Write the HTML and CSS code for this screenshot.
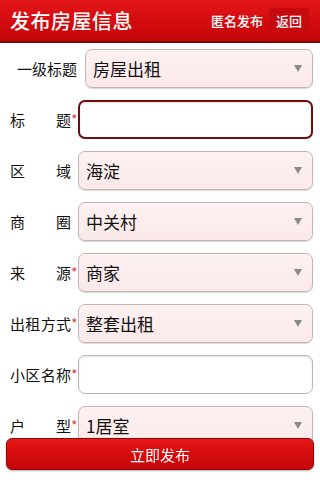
FILE: index.html
```
<!doctype html>
<html>
<head>
  <meta charset="utf-8">
  <title>发布房屋信息</title>
  <link rel="stylesheet" href="styles.css">
</head>
<body>
  <div class="topbar">
    <h1>发布房屋信息</h1>
    <span class="anon">匿名发布</span>
    <span class="back">返回</span>
  </div>
  <div class="form">
    <div class="row first">
      <span class="label">一级标题</span>
      <div class="field select">房屋出租<i class="arrow"></i></div>
    </div>
    <div class="row">
      <span class="label">标题</span><span class="star">*</span>
      <div class="field input focus"></div>
    </div>
    <div class="row">
      <span class="label">区域</span><span class="star"></span>
      <div class="field select">海淀<i class="arrow"></i></div>
    </div>
    <div class="row">
      <span class="label">商圈</span><span class="star"></span>
      <div class="field select">中关村<i class="arrow"></i></div>
    </div>
    <div class="row">
      <span class="label">来源</span><span class="star">*</span>
      <div class="field select">商家<i class="arrow"></i></div>
    </div>
    <div class="row">
      <span class="label">出租方式</span><span class="star">*</span>
      <div class="field select">整套出租<i class="arrow"></i></div>
    </div>
    <div class="row">
      <span class="label">小区名称</span><span class="star">*</span>
      <div class="field input"></div>
    </div>
    <div class="row">
      <span class="label">户型</span><span class="star">*</span>
      <div class="field select">1居室<i class="arrow"></i></div>
    </div>
  </div>
  <div class="submit">立即发布</div>
</body>
</html>
```

FILE: styles.css
```
body {
  margin: 0;
  background: #fff;
  font-family: "Noto Sans CJK SC", "Noto Sans", sans-serif;
  color: #111;
}
.topbar {
  height: 41px;
  display: flex;
  align-items: center;
  padding: 0 11px 0 10px;
  background: linear-gradient(#e3171a, #d20a0d 60%, #c2080a);
  border-bottom: 2px solid #7e0606;
  color: #fff;
}
.topbar h1 {
  flex: 1;
  margin: 0;
  font-size: 20px;
  font-weight: 500;
  letter-spacing: 0.5px;
}
.anon {
  font-size: 13px;
  font-weight: 500;
  margin-right: 6px;
}
.back {
  font-size: 13px;
  font-weight: 500;
  padding: 3px 7px;
  background: #c60b0e;
  border-radius: 2px;
}
.form {
  padding: 6px 7px 20px 10px;
}
.row {
  display: flex;
  align-items: center;
  height: 39px;
  margin-bottom: 12px;
}
.row.first {
  padding-left: 7px;
}
.row.first .label {
  margin-right: 7px;
  text-align-last: auto;
}
.label {
  width: 61px;
  font-size: 15px;
  text-align: justify;
  text-align-last: justify;
}
.star {
  width: 7px;
  color: #d84444;
  font-size: 14px;
  line-height: 1;
  text-align: left;
  align-self: flex-start;
  margin-top: 12px;
}
.field {
  flex: 1;
  height: 100%;
  box-sizing: border-box;
  border-radius: 7px;
  display: flex;
  align-items: center;
  padding: 0 10px 0 7px;
  font-size: 17px;
}
.select {
  background: linear-gradient(#fdf1f1, #fbe9e9);
  border: 1px solid #c4b5b5;
  box-shadow: 0 1px 1px rgba(0,0,0,0.15);
}
.input {
  background: #fff;
  border: 1px solid #bdb5b5;
  box-shadow: inset 0 1px 2px rgba(0,0,0,0.12);
}
.input.focus {
  border: 2px solid #6e0d0d;
}
.arrow {
  margin-left: auto;
  width: 0;
  height: 0;
  border-left: 4px solid transparent;
  border-right: 4px solid transparent;
  border-top: 7px solid #8a8a8a;
}
.submit {
  position: fixed;
  left: 6px;
  right: 6px;
  bottom: 10px;
  height: 32px;
  box-sizing: border-box;
  border: 1px solid #8e0606;
  border-radius: 6px;
  background: linear-gradient(#e8191a, #d50b0c 50%, #c5080a);
  color: #fff;
  font-size: 15px;
  display: flex;
  align-items: center;
  justify-content: center;
  box-shadow: 0 1px 2px rgba(0,0,0,0.3);
}
```
